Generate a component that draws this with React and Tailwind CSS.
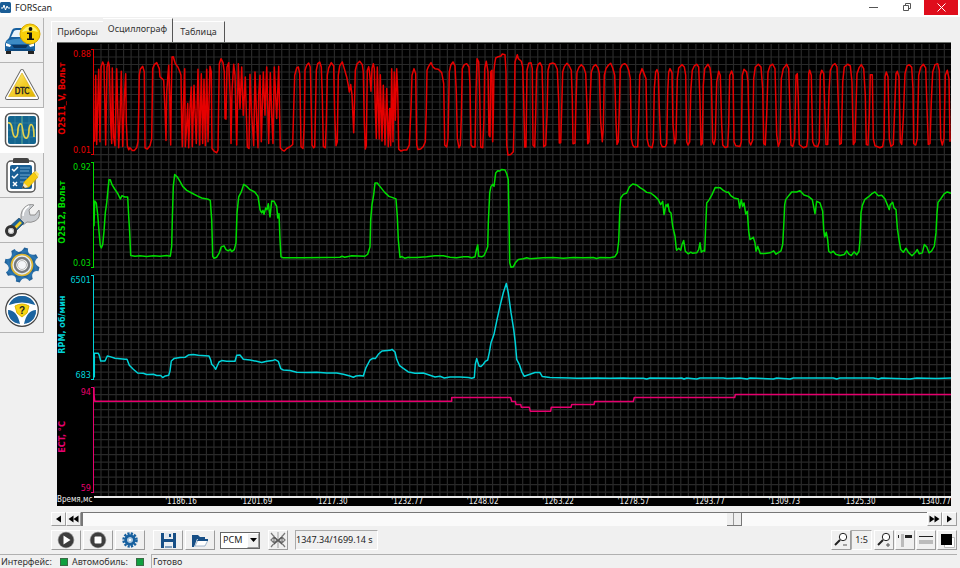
import React from "react";

const CHANNELS = [
  { name: "O2S11_V, Вольт", max: "0.88", min: "0.01", color: "text-[#e60000]" },
  { name: "O2S12, Вольт", max: "0.92", min: "0.03", color: "text-[#00dc00]" },
  { name: "RPM, об/мин", max: "6501", min: "683", color: "text-[#00d2d8]" },
  { name: "ECT, °C", max: "94", min: "59", color: "text-[#e6006e]" },
];

const TIMES = ["1186.16", "1201.69", "1217.30", "1232.77", "1248.02", "1263.22", "1278.57", "1293.77", "1309.73", "1325.30", "1340.77"];

/* Each block: origin x, origin y, samples "x,y" at three units per plot unit. */
const TRACES = [
  {
    color: "#e60000",
    blocks: [
      [90, 42, "14,300 17,100 20,308 26,82 30,300 33,75 38,60 42,70 47,310 51,75 55,60 58,72 62,245 65,305 67,78 71,285 75,312 80,80 86,318 90,230 94,88 98,314 103,170 107,95 109,240 112,312 116,324 120,318 127,326 133,326 140,318 144,300 146,205 148,100 151,82 158,73 163,90 165,318 172,322 180,312 185,290 188,80 193,68 200,62 208,80 210,105 216,110 221,115 225,205 228,296 230,150 236,70 239,165 242,310 244,150 246,45 250,44 256,65 264,76 270,90 273,100 275,250 277,315 280,200 284,80 286,315 290,250 293,185 296,318 300,200 304,135 307,315 312,130 319,305 324,82 329,310 334,95 338,305 342,112 346,312 350,82 354,300 360,73 364,90 366,320 372,328 380,333 384,325 386,180 388,65 393,50 399,62 403,90 405,230 408,232 411,75 416,62 421,170 423,305 426,150 431,67 435,100 440,310 445,65 450,200 455,75 460,220 466,105 472,316 477,320 480,97 485,220 491,312 495,90 500,240 504,318 506,160 510,100 514,300 520,90 525,220 530,75 536,305 541,92 545,220 549,305 553,75 560,230 566,73 571,318 577,325 583,328 590,320 600,315 608,308 611,200 614,100 620,78 625,75 629,95"],
      [300, 42, "0,135 3,315 9,320 13,250 15,85 20,70 26,63 31,75 34,200 36,310 41,318 44,315 47,180 49,85 53,65 59,60 64,75 67,160 70,314 76,318 79,250 82,100 86,78 94,62 101,72 104,220 108,312 112,300 115,100 119,72 127,60 133,80 140,105 145,130 148,150 152,128 156,160 161,273 164,160 166,85 171,66 179,58 187,68 190,90 193,240 196,322 199,312 202,85 206,74 209,95 213,148 216,80 220,65 223,80 226,200 229,290 232,75 238,292 241,98 246,298 250,130 255,310 260,140 265,315 269,200 272,312 275,80 279,300 283,90 286,235 290,80 293,150 296,322 303,328 311,325 320,325 328,310 333,200 336,100 342,80 347,95 350,310 354,323 362,322 370,314 376,300 379,205 381,85 385,75 393,62 399,75 405,80 415,82 425,92 431,125 434,310 440,316 444,290 448,90 452,70 459,60 465,72 469,150 472,290 477,318 481,310 484,230 487,80 493,68 500,65 507,75 510,130 513,310 518,316 525,316 528,150 531,50 536,60 539,160 542,316 548,318 552,230 554,80 559,58 564,90 567,280 570,285 572,90 576,85 578,300 580,220 582,85 584,65 587,48 595,44 603,42 607,36 615,38 618,90 620,310 624,340 632,338 640,330 643,220 645,60"],
      [510, 42, "18,50 22,38 25,50 34,58 38,75 41,180 44,316 48,316 51,85 56,64 63,62 67,80 69,310 74,316 77,220 80,85 84,68 90,62 96,74 98,150 101,315 107,310 111,220 114,85 119,66 128,63 135,66 142,82 146,180 148,304 152,303 155,200 158,90 163,74 171,64 178,72 184,85 187,170 189,306 195,304 198,180 201,90 207,76 214,68 221,76 227,95 231,200 233,306 237,300 240,180 244,90 250,74 257,68 264,78 268,95 272,240 277,300 280,260 283,100 288,80 295,70 302,64 308,78 314,100 318,240 321,308 325,300 328,200 331,80 337,68 344,65 350,70 356,85 361,110 364,290 368,310 373,316 383,315 386,230 389,100 396,80 401,92 408,110 411,290 416,312 426,318 430,300 433,140 437,90 441,83 445,95 448,200 452,305 457,315 466,315 470,305 473,150 476,90 480,80 486,92 489,250 494,306 498,290 502,110 506,78 516,68 523,75 527,100 530,300 534,310 539,300 542,150 547,85 553,72 560,67 566,75 570,180 573,310 577,305 580,130 584,80 594,67 600,78 604,110 608,300 612,308 616,290 620,120 626,88 631,100 635,250 638,310"],
      [720, 42, "15,317 23,315 26,250 29,100 35,87 39,100 42,300 47,312 60,314 64,300 67,100 72,82 80,90 84,120 88,300 92,310 98,295 101,110 106,75 115,67 123,75 128,140 131,305 136,310 140,220 144,90 150,72 158,67 165,80 170,280 175,314 180,300 184,110 190,80 200,67 206,80 209,180 213,310 218,314 224,290 228,100 232,95 235,170 238,308 250,318 260,314 263,290 266,95 269,85 274,100 278,300 283,312 293,315 298,300 301,100 305,85 311,95 315,220 318,308 323,308 327,150 331,85 338,70 345,65 351,75 355,180 359,308 364,305 368,120 373,75 383,67 391,72 396,120 400,308 405,300 411,95 417,78 424,68 431,80 436,160 439,308 444,310 448,220 451,98 457,98 460,290 465,312 480,318 488,314 492,290 495,105 499,90 504,105 508,290 513,314 520,308 524,200 528,95 532,88 537,105 541,300 545,308 550,230 555,95 561,72 568,68 575,76 579,140 581,305 587,310 592,290 596,100 602,76 610,67 617,78 621,200 625,308 630,305 634,180 638,90 645,68 653,65 658,85 662,290 667,310 672,290 676,100 682,85 687,110 690,300"],
    ],
  },
  {
    color: "#00dc00",
    blocks: [
      [90, 160, "12,200 14,124 19,130 23,165 27,215 31,258 34,265 38,255 42,215 46,160 50,130 54,90 57,60 61,60 66,75 74,88 84,103 91,118 96,108 104,112 113,112 116,170 119,220 122,288 135,290 150,289 170,291 190,289 210,290 230,288 241,290 245,260 247,180 250,80 254,44 262,52 270,65 278,80 290,92 305,100 320,108 335,115 355,119 361,122 365,180 368,290 372,296 380,293 388,280 394,262 402,259 408,270 415,274 421,269 425,276 433,270 438,250 441,160 446,112 454,97 461,74 470,80 480,90 494,97 504,110 510,150 515,160 519,152 522,164 527,145 531,150 535,132 540,172 545,124 552,125 560,140 563,175 567,162 570,240 573,292 580,295 640,295 700,294 750,293 756,290 764,293 785,289 825,290 833,284 840,262 842,180 846,135 851,105 855,70 862,70 872,83 884,98 897,110 908,114 918,118 922,170 925,240 930,294 936,291 944,296 955,293"],
      [410, 160, "0,294 20,294 50,292 75,289 100,289 120,293 140,295 160,292 175,292 185,295 195,292 199,272 203,256 206,290 215,292 222,288 228,275 233,262 235,190 239,100 243,80 248,74 252,80 257,40 263,33 269,34 275,29 285,31 290,42 295,60 297,180 299,310 303,323 310,322 316,310 325,300 340,298 350,295 360,298 380,296 400,295 430,294 460,296 490,294 520,295 550,294 560,297 570,294 600,295 614,292 622,280 626,245 629,160 632,115 640,104 650,100 658,82 668,73 680,76 690,84 700,90 710,98 722,100 735,110 745,120 752,135 758,125 762,165 768,135 772,140 774,133 778,155 783,160 788,200 795,230 799,268"],
      [660, 160, "50,272 56,266 62,272 66,255 71,243 76,275 85,283 92,278 97,281 110,280 116,270 120,250 124,278 130,273 134,275 137,200 140,130 148,120 156,105 166,83 180,84 190,92 200,98 205,97 212,108 222,115 235,118 239,145 244,120 248,140 252,130 257,163 262,155 266,215 270,240 280,233 285,250 288,275 293,260 301,282 315,282 330,280 341,274 348,284 363,274 368,255 371,200 374,135 377,120 386,108 395,97 410,97 420,93 432,106 445,110 457,120 465,162 470,125 480,130 488,155 491,210 494,232 499,218 503,240 506,275 512,280 520,275 527,284 540,288 553,285 560,274 566,283 574,288 582,277 590,286 597,275 600,240 603,160 607,138 614,120 625,112 636,102 645,97 655,108 665,107 675,118 688,150 691,135 698,128 702,145 708,150 712,205 717,240 722,270 730,278 738,266 745,278 756,289 765,280 772,270 778,283 787,280 793,255 800,262 807,280 815,274 823,260 828,220 831,160 834,128 842,118 852,103 862,97 873,101"],
    ],
  },
  {
    color: "#00d2d8",
    blocks: [
      [90, 160, "13,655 13,582 25,582 28,588 32,605 45,605 52,590 60,592 75,597 105,600 111,600 118,618 130,630 143,641 160,642 170,646 190,645 200,649 212,649 218,655 226,650 236,648 240,635 244,605 252,598 270,595 285,594 295,587 310,586 325,588 357,590 362,602 365,615 372,622 377,630 387,608 395,604 410,606 435,606 440,588 450,587 460,600 480,602 500,606 515,610 530,606 548,604 555,601 565,606 572,628 580,632 600,634 620,639 650,640 680,639 710,641 740,641 760,645 780,650 790,654 798,650 810,649 820,650 828,625 840,602 848,597 856,598 865,585 876,575 900,573 906,570 915,578 920,600 928,618 940,627 955,638"],
      [410, 160, "0,639 15,642 40,641 60,648 75,653 90,651 103,656 120,653 150,653 175,655 185,657 193,655 196,615 200,598 207,620 213,622 220,615 226,606 233,602 238,580 243,550 252,525 260,485 270,440 280,400 289,372 295,400 303,460 311,510 316,550 320,600 328,615 335,637 343,651 360,645 375,640 390,640 397,652 420,655 480,656 500,657 560,656 600,657 640,656 660,657 700,657 710,659 720,656 800,657"],
      [660, 160, "65,656 72,659 80,656 110,659 120,656 190,656 200,658 240,656 262,659 270,656 340,659 350,656 390,659 400,656 520,656 530,659 540,656 640,656 655,659 665,656 750,659 770,656 830,658 873,656"],
    ],
  },
  {
    color: "#e6006e",
    blocks: [
      [40, 380, "162,25 162,45 164,66"],
      [410, 160, "-500,726 125,726 125,715 302,715 305,726 316,727 318,736 332,736 334,744 358,744 361,756 422,756 424,744 483,744 485,736 552,736 554,727 670,727 673,715"],
      [660, 160, "224,715 226,706 873,706"],
    ],
  },
];

const toPoints = (blocks) =>
  blocks
    .flatMap(([ox, oy, s]) =>
      s.split(" ").map((p) => {
        const [x, y] = p.split(",").map(Number);
        return `${(ox + x / 3).toFixed(1)},${(oy + y / 3).toFixed(1)}`;
      })
    )
    .join(" ");

const VERTICAL = Array.from({ length: 114 }, (_, i) => 101 + i * 7.53);
const HORIZONTAL = Array.from({ length: 60 }, (_, i) => 49.5 + i * 7.52);

function Plot() {
  return (
    <svg className="block h-0 w-full flex-1" viewBox="94 43 857 454" preserveAspectRatio="none" role="img" aria-label="Осциллограф">
      <g stroke="#292929" strokeWidth="1.2">
        {VERTICAL.map((x) => (
          <line key={x} x1={x} x2={x} y1="44" y2="497" vectorEffect="non-scaling-stroke" />
        ))}
        {HORIZONTAL.map((y) => (
          <line key={y} x1="94" x2="951" y1={y} y2={y} vectorEffect="non-scaling-stroke" />
        ))}
      </g>
      {TRACES.map((t) => (
        <polyline key={t.color} points={toPoints(t.blocks)} fill="none" stroke={t.color} strokeWidth="1.5" strokeLinejoin="round" vectorEffect="non-scaling-stroke" />
      ))}
    </svg>
  );
}

function CarIcon() {
  return (
    <svg width="38" height="34" viewBox="0 0 38 34">
      <path d="M3 27h5v4H3zM25 27h6v4h-6z" fill="#222" />
      <path d="M3 18 6 15 9 7Q10 5 13 5H24Q27 6 28 9L30 15 32 19V28H2V21Z" fill="#17609f" />
      <path d="M8 14 11 8Q12 7 14 7H23L26 14Z" fill="#e9f3fa" />
      <path d="M3 18Q17 13 31 18L29 21H5Z" fill="#3c8bc4" />
      <path d="M9 22H25L23 25H11Z" fill="#0b3560" />
      <path d="M3 20 8 22 7 24 3 23ZM31 20 26 22 27 24 31 23Z" fill="#fff" />
      <path d="M4 27H30" stroke="#0b3560" />
      <circle cx="27" cy="11" r="10" fill="#f8cf08" stroke="#d9a900" />
      <path d="M19 9Q22 3 28 3 33 4 35 9 27 6 19 9Z" fill="#fff26a" />
      <circle cx="27.500" cy="6" r="1.900" fill="#111" />
      <path d="M24 9.500H29V15.500H31V17H24V15.500H26V11H24Z" fill="#111" />
    </svg>
  );
}

function DtcIcon() {
  return (
    <svg width="36" height="34" viewBox="0 0 36 34">
      <defs>
        <linearGradient id="dtc" x1="0" x2="1" y1="0" y2="1">
          <stop offset="0" stopColor="#fff08a" />
          <stop offset=".5" stopColor="#f4cf2c" />
          <stop offset="1" stopColor="#e0b400" />
        </linearGradient>
      </defs>
      <path d="M18 3 33 30H3Z" fill="#666" stroke="#666" strokeWidth="4" strokeLinejoin="round" />
      <path d="M18 3 33 30H3Z" fill="#fff" stroke="#fff" strokeWidth="2.200" strokeLinejoin="round" />
      <path d="M18 5 31.500 28.500H4.500Z" fill="url(#dtc)" stroke="#d5ab13" strokeWidth=".6" />
      <text x="18" y="26" textAnchor="middle" className="font-['DejaVu_Sans_Condensed'] text-[8px]" fill="#222" stroke="#222" strokeWidth=".4">DTC</text>
    </svg>
  );
}

function ScopeIcon() {
  return (
    <svg width="36" height="36" viewBox="0 0 36 36">
      <rect x="1.500" y="1.500" width="33" height="33" rx="5" fill="#fff" stroke="#555" strokeWidth="1.500" />
      <rect x="4" y="4" width="28" height="28" rx="2" fill="#14658f" />
      <path d="M4 18H32M18 4V32M11 4V32M25 4V32M4 11H32M4 25H32" stroke="#3a86a6" strokeWidth=".6" />
      <path d="M18 4V32" stroke="#5fa98e" />
      <path d="M4 11Q7 10 8 16 9 26 12 25 14 24 14 17 15 11 17 12 18 12 19 20 20 27 23 26 25 24 25 17 26 11 28 13 30 15 30 25" fill="none" stroke="#e3d04c" strokeWidth="1.700" />
    </svg>
  );
}

function ChecklistIcon() {
  return (
    <svg width="36" height="36" viewBox="0 0 36 36">
      <rect x="3" y="4" width="28" height="31" rx="4" fill="#fff" stroke="#555" strokeWidth="1.500" />
      <rect x="6" y="8" width="22" height="24" rx="2" fill="#195f95" />
      <path d="M9 5V2Q9 1 11 1H23Q25 1 25 3V6H9Z" fill="#444" />
      <path d="m8 12 2 2 4-4M8 19l2 2 4-4M9 25l4 4m0-4-4 4" fill="none" stroke="#fff" strokeWidth="1.500" />
      <path d="M16 11H26M16 14H25M16 18H26M16 21H23M16 25H20" stroke="#6fa7d0" strokeWidth="1.200" />
      <path d="M19 31 20 25 30 15 34 20 25 30Z" fill="#f5cc12" stroke="#d0a000" strokeWidth=".6" />
      <path d="M30 15 32 14 35 17 34 20Z" fill="#ffe56c" />
      <path d="M18 31.500 20 26 24 30Z" fill="#f6e4c0" />
      <path d="m18 31.500 1-2.500 2 1.500Z" fill="#333" />
    </svg>
  );
}

function WrenchIcon() {
  return (
    <svg width="38" height="38" viewBox="0 0 38 38">
      <path d="M18 18Q17 8 25 4 29 3 31 4L26 9 27 14 32 14 36 9Q38 17 32 20 28 22 24 21L20 24 15 20Z" fill="#c9ccd0" stroke="#888" strokeWidth=".9" />
      <path d="M20 15Q20 8 26 5" fill="none" stroke="#fff" strokeWidth="1.500" />
      <path d="M16 17 21 22 12 31 6 26Z" fill="#1c6196" stroke="#183d58" strokeWidth=".6" />
      <path d="M17 20 19 22 11 30 9 28Z" fill="#f1cd25" />
      <circle cx="8" cy="30" r="4.500" fill="#eee" stroke="#333" strokeWidth="3" />
      <circle cx="8" cy="30" r="2.500" fill="#f4f4f4" stroke="#999" strokeWidth=".6" />
    </svg>
  );
}

function GearIcon() {
  return (
    <svg width="38" height="36" viewBox="-19 -18 38 36">
      <defs>
        <linearGradient id="gear" x1="0" x2="1" y1="0" y2="1">
          <stop offset="0" stopColor="#123f70" />
          <stop offset=".5" stopColor="#2b78b5" />
          <stop offset="1" stopColor="#164c80" />
        </linearGradient>
      </defs>
      <g fill="url(#gear)">
        <circle r="13.500" />
        {[0, 45, 90, 135, 180, 225, 270, 315].map((a) => (
          <path key={a} transform={`rotate(${a + 14})`} d="M-7-11Q-3-13-2-17.500L2-17.500Q2-13 7-11Z" />
        ))}
      </g>
      <circle r="10.500" fill="#e8edf2" stroke="#dcb533" strokeWidth="1.700" />
      <circle r="7" fill="#fff" stroke="#777b80" strokeWidth="2.500" />
      <circle r="4.500" fill="#f4f5f8" stroke="#bbb" />
    </svg>
  );
}

function WheelIcon() {
  return (
    <svg width="36" height="36" viewBox="-18 -18 36 36">
      <circle r="16.300" fill="#fff" stroke="#444" strokeWidth="1.200" />
      <circle r="14" fill="#1b64a0" />
      <path d="M-15-4Q-7-9 0-9T15-4L14 2Q9 3 4 14H-4Q-9 3-14 2Z" fill="#fff" />
      <path d="M-14 0Q-5 0-2 14-14 12-14 0ZM14 0Q5 0 2 14 14 12 14 0Z" fill="#1b64a0" />
      <path d="M-13-5Q-9-14 0-14T13-5Q0-10-13-5Z" fill="#1b64a0" />
      <path d="M-7-4Q0-8 7-4L5 3 0 7-5 3Z" fill="#f6d414" stroke="#dfb400" />
      <text y="4" textAnchor="middle" className="font-['Liberation_Sans'] text-[10px] font-bold" fill="#222">?</text>
    </svg>
  );
}

const SIDEBAR = [
  ["Автомобиль", CarIcon],
  ["DTC", DtcIcon],
  ["Осциллограф", ScopeIcon],
  ["Тесты", ChecklistIcon],
  ["Сервис", WrenchIcon],
  ["Настройки", GearIcon],
  ["Помощь", WheelIcon],
];

const raised = "flex items-center justify-center border border-t-white border-l-white border-r-[#9c9c9c] border-b-[#9c9c9c] bg-[#f0f0f0]";

function ToolButton({ label, wide, children }) {
  return (
    <button type="button" aria-label={label} className={`${raised} h-5 shrink-0 ${wide ? "w-[30px]" : "w-5"}`}>
      {children}
    </button>
  );
}

function Disc({ children }) {
  return (
    <svg width="18" height="18" viewBox="0 0 18 18">
      <circle cx="9" cy="9" r="8.300" fill="#999" />
      <circle cx="9" cy="9" r="7.500" fill="#3d3d3d" />
      {children}
    </svg>
  );
}

function Magnifier({ plus }) {
  return (
    <svg width="16" height="16" viewBox="0 0 16 16" fill="none" stroke="#222">
      <circle cx="10" cy="5" r="3.700" fill="#fff" />
      <path d="M7 8 2 13" strokeWidth="2" />
      <path d={plus ? "M10 13H14M12 11V15" : "M10 13H14"} stroke="#555" />
    </svg>
  );
}

function ScrollButton({ label, d }) {
  return (
    <button type="button" aria-label={label} className={`${raised} h-[14px] w-[15px] shrink-0`}>
      <svg width="11" height="8" viewBox="0 0 11 8"><path d={d} fill="#000" /></svg>
    </button>
  );
}

export default function App() {
  return (
    <div className="flex h-screen min-h-[400px] flex-col overflow-hidden bg-[#f0f0f0] font-['Noto_Sans','Open_Sans',sans-serif] text-[9px] leading-3 text-[#222]">
      <header className="flex h-[17px] shrink-0 items-start bg-white">
        <svg className="mt-[2px] mr-1" width="11" height="11" viewBox="0 0 11 11">
          <rect width="11" height="11" rx="1.500" fill="#1a5d96" />
          <path d="M1 6H3L4 3 5.500 8 7 4 8 6H10" fill="none" stroke="#fff" />
        </svg>
        <h1 className="flex-1 pt-[2px] text-[9px]">FORScan</h1>
        <button type="button" aria-label="Свернуть" className="flex h-[14px] w-[34px] items-center justify-center">
          <svg width="9" height="9"><path d="M0 4.500H9" stroke="#555" /></svg>
        </button>
        <button type="button" aria-label="Развернуть" className="flex h-[14px] w-[34px] items-center justify-center">
          <svg width="8" height="8" fill="none" stroke="#555"><path d="M.5 2.500H5.500V7.500H.5ZM2.500 2.500V.5H7.500V5.500H5.500" /></svg>
        </button>
        <button type="button" aria-label="Закрыть" className="mr-[2px] flex h-[15px] w-[34px] items-center justify-center bg-[#df0d1c]">
          <svg width="9" height="9"><path d="m.5.5 8 8m0-8-8 8" stroke="#fff" /></svg>
        </button>
      </header>

      <div className="flex min-h-0 flex-1">
        <nav className="flex w-11 shrink-0 flex-col pt-px">
          {SIDEBAR.map(([label, Icon], i) => (
            <button
              key={label}
              type="button"
              aria-label={label}
              className={`flex h-[45px] shrink-0 items-center justify-center border-r border-b ${i === 2 ? "border-white bg-white" : "border-[#b4b4b4]"}`}
            >
              <Icon />
            </button>
          ))}
        </nav>

        <main className="flex min-w-0 flex-1 flex-col pr-[3px] pl-[7px]">
          <div role="tablist" className="flex h-[25px] shrink-0 items-end text-[#333]">
            <button type="button" role="tab" aria-selected="false" className="h-[21px] w-[52px] border-t border-l border-white">Приборы</button>
            <button type="button" role="tab" aria-selected="true" className="h-[24px] w-[70px] border-t border-r border-t-white border-r-[#555] pb-[3px]">Осциллограф</button>
            <button type="button" role="tab" aria-selected="false" className="h-[21px] w-[52px] border-t border-r border-t-white border-r-[#555]">Таблица</button>
          </div>

          <section className="mr-[6px] ml-[6px] flex min-h-0 flex-1 flex-col border-t border-[#6c706c] bg-black font-['DejaVu_Sans_Condensed','DejaVu_Sans',sans-serif] text-[9px] leading-[10px]">
            <div className="flex min-h-0 flex-1">
              <div className="flex w-[37px] shrink-0 flex-col gap-[7px] pt-[6px] pb-[3px]">
                {CHANNELS.map((c) => (
                  <div key={c.name} className={`flex min-h-0 flex-1 ${c.color}`}>
                    <div className="flex w-[10px] shrink-0 rotate-180 items-center justify-center pt-[6px] text-[9px] font-bold whitespace-nowrap [writing-mode:vertical-rl]">{c.name}</div>
                    <div className="flex flex-1 flex-col items-end justify-between">
                      <span>{c.max}</span>
                      <span>{c.min}</span>
                    </div>
                    <div className="w-[3px] shrink-0 border-y border-r border-current" />
                  </div>
                ))}
              </div>
              <div className="flex min-w-0 flex-1 flex-col">
                <Plot />
              </div>
            </div>
            <div className="flex h-[10px] shrink-0 text-[8px] leading-[8px] whitespace-nowrap text-[#eee]">
              <span className="w-[37px] shrink-0">Время,мс</span>
              <ol className="flex min-w-0 flex-1 border-t-2 border-[#e8e8e8]">
                <li aria-hidden="true" className="w-[8.3%] shrink-0" />
                {TIMES.map((t) => (
                  <li key={t} className="w-[8.8%] shrink-0 last:w-auto">'{t}</li>
                ))}
              </ol>
            </div>
          </section>

          <div className="mt-[6px] flex h-[14px] shrink-0 items-stretch">
            <ScrollButton label="Назад" d="M8 0.500V7.500L3 4Z" />
            <ScrollButton label="Быстро назад" d="M5.500 .5V7.500L.5 4ZM10.500 .5V7.500L5.500 4Z" />
            <input
              type="range"
              aria-label="Время"
              min="0"
              max="1000"
              defaultValue="777"
              className="h-[14px] min-w-0 flex-1 appearance-none border-t border-l-2 border-[#777] bg-[#fafafa] [&::-webkit-slider-thumb]:h-[13px] [&::-webkit-slider-thumb]:w-[15px] [&::-webkit-slider-thumb]:appearance-none [&::-webkit-slider-thumb]:border-r [&::-webkit-slider-thumb]:border-b [&::-webkit-slider-thumb]:border-[#777] [&::-webkit-slider-thumb]:bg-[linear-gradient(90deg,#eee_45%,#999_45%,#999_52%,#eee_52%)]"
            />
            <ScrollButton label="Быстро вперёд" d="M.5 .5V7.500L5.500 4ZM5.500 .5V7.500L10.500 4Z" />
            <ScrollButton label="Вперёд" d="M3 .5V7.500L8 4Z" />
          </div>

          <div className="mt-1 flex h-5 shrink-0 items-center gap-[2px]">
            <ToolButton label="Старт" wide><Disc><path d="M6.500 4.500V13.500L13.500 9Z" fill="#fff" /></Disc></ToolButton>
            <ToolButton label="Стоп" wide><Disc><rect x="5.500" y="5.500" width="7" height="7" rx="1" fill="#fff" /></Disc></ToolButton>
            <ToolButton label="Параметры" wide>
              <svg width="16" height="16" viewBox="-8 -8 16 16" fill="none" stroke="#17609f">
                <circle r="6.500" strokeWidth="2.500" strokeDasharray="2.200 1.200" />
                <circle r="4.300" strokeWidth="3" />
                <circle r="2" stroke="#8fb7d8" fill="#fff" />
              </svg>
            </ToolButton>
            <div className="w-1" />
            <ToolButton label="Сохранить" wide>
              <svg width="15" height="15" viewBox="0 0 15 15">
                <path d="M0 0H3V6H12V0H15V15H12V9H3V15H0Z" fill="#174f86" />
                <path d="M4 0H11V5H4Z" fill="#dde6ee" />
                <path d="M8 1H10V4H8Z" fill="#174f86" />
                <path d="M4 10H11V15H4Z" fill="#e9eff4" />
                <path d="M4 14H11" stroke="#174f86" />
              </svg>
            </ToolButton>
            <ToolButton label="Открыть" wide>
              <svg width="16" height="13" viewBox="0 0 16 13">
                <path d="M0 13V1H6L8 3H13V5H5L2 13Z" fill="#174f86" />
                <path d="M6 6H16L13 12H3Z" fill="#fff" stroke="#7b9ab7" strokeWidth=".7" />
                <path d="M6 5H16V7H5Z" fill="#174f86" />
              </svg>
            </ToolButton>
            <div className="relative ml-[3px] h-[17px] w-10 shrink-0 border border-[#666] bg-white">
              <select aria-label="Модуль" defaultValue="PCM" className="h-full w-full appearance-none pl-[2px] text-[9px] leading-[14px]">
                <option>PCM</option>
              </select>
              <span className={`${raised} pointer-events-none absolute top-0 right-0 h-full w-3`}>
                <svg width="7" height="4"><path d="M0 0H7L3.500 4Z" /></svg>
              </span>
            </div>
            <div className="w-1" />
            <ToolButton label="Маркеры">
              <svg width="16" height="16" viewBox="0 0 16 16" fill="none" stroke="#777" strokeWidth="1.200">
                <path d="M1 1 7 8 1 15M15 1 9 8 15 15M1 8 4 5V11ZM15 8 12 5V11Z" />
                <path d="M8 0V16" stroke="#aaa" />
                <path d="M4 5 12 12M12 5 4 12" stroke="#555" />
              </svg>
            </ToolButton>
            <output className="ml-[5px] h-5 w-[83px] shrink-0 border border-t-[#aaa] border-r-white border-b-white border-l-[#aaa] leading-[18px] whitespace-nowrap">1347.34/1699.14 s</output>
            <div className="flex-1" />
            <div className="flex">
              <ToolButton label="Уменьшить"><Magnifier /></ToolButton>
              <output className="h-5 w-[21px] border border-t-[#aaa] border-r-white border-b-white border-l-[#aaa] text-center leading-[18px]">1:5</output>
            </div>
            <div className="flex gap-px">
              <ToolButton label="Увеличить"><Magnifier plus /></ToolButton>
              <ToolButton label="Положение">
                <svg width="16" height="14"><path d="M4 1H7V14H4Z" fill="#bbb" /><path d="M1 2H2V5H1ZM8 2H15V5H8Z" fill="#222" /></svg>
              </ToolButton>
              <ToolButton label="Толщина линий">
                <svg width="14" height="10"><path d="M0 1.500H14" stroke="#222" /><path d="M0 5H14V9H0Z" fill="#bbb" /></svg>
              </ToolButton>
              <ToolButton label="Цвет фона">
                <svg width="15" height="15"><path d="M4.500 4.500H14.500V14.500H4.500Z" fill="#fff" stroke="#bbb" /><path d="M1 1H12V12H1Z" /></svg>
              </ToolButton>
            </div>
          </div>
        </main>
      </div>

      <footer className="mt-1 flex h-[14px] shrink-0 gap-1 pr-[3px] leading-[14px] whitespace-nowrap text-[#333]">
        <div className="flex w-[147px] items-center gap-1 border-t border-[#b0b0b0] pl-px">
          <span>Интерфейс:</span>
          <span className="ml-1 h-2 w-2 border border-[#3a6b45] bg-[#10a040]" />
          <span>Автомобиль:</span>
          <span className="ml-1 h-2 w-2 border border-[#3a6b45] bg-[#10a040]" />
        </div>
        <div className="flex-1 border-t border-l border-[#b0b0b0] pl-[1px]">Готово</div>
      </footer>
    </div>
  );
}
